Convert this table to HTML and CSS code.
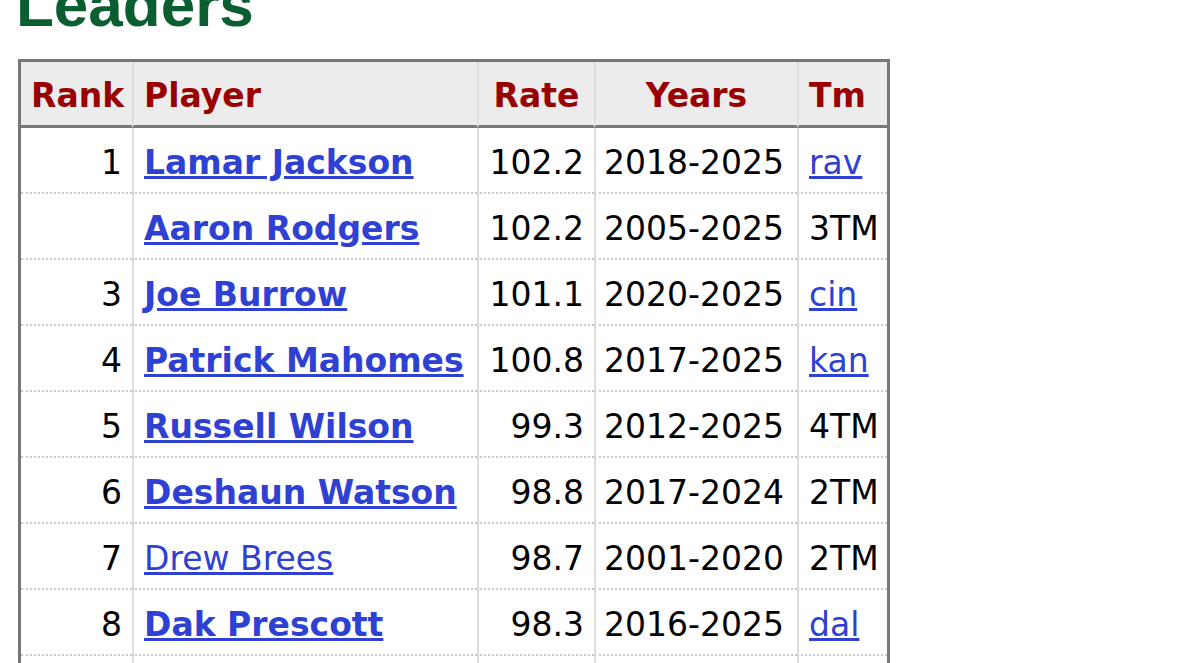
FILE: index.html
```html
<!DOCTYPE html>
<html lang="en">
<head>
    <meta charset="UTF-8">
    <meta name="viewport" content="width=device-width, initial-scale=1.0">
    <title>Leaders</title>
    <link rel="stylesheet" href="styles.css">
</head>
<body>
    <div class="page">
        <h1>Leaders</h1>

        <table class="leaders">
            <thead>
                <tr>
                    <th class="rank">Rank</th>
                    <th class="player">Player</th>
                    <th class="rate">Rate</th>
                    <th class="years">Years</th>
                    <th class="team">Tm</th>
                </tr>
            </thead>
            <tbody>
                <tr>
                    <td class="rank">1</td>
                    <td class="player"><a href="#" class="active">Lamar Jackson</a></td>
                    <td class="rate">102.2</td>
                    <td class="years">2018-2025</td>
                    <td class="team"><a href="#">rav</a></td>
                </tr>
                <tr>
                    <td class="rank"></td>
                    <td class="player"><a href="#" class="active">Aaron Rodgers</a></td>
                    <td class="rate">102.2</td>
                    <td class="years">2005-2025</td>
                    <td class="team">3TM</td>
                </tr>
                <tr>
                    <td class="rank">3</td>
                    <td class="player"><a href="#" class="active">Joe Burrow</a></td>
                    <td class="rate">101.1</td>
                    <td class="years">2020-2025</td>
                    <td class="team"><a href="#">cin</a></td>
                </tr>
                <tr>
                    <td class="rank">4</td>
                    <td class="player"><a href="#" class="active">Patrick Mahomes</a></td>
                    <td class="rate">100.8</td>
                    <td class="years">2017-2025</td>
                    <td class="team"><a href="#">kan</a></td>
                </tr>
                <tr>
                    <td class="rank">5</td>
                    <td class="player"><a href="#" class="active">Russell Wilson</a></td>
                    <td class="rate">99.3</td>
                    <td class="years">2012-2025</td>
                    <td class="team">4TM</td>
                </tr>
                <tr>
                    <td class="rank">6</td>
                    <td class="player"><a href="#" class="active">Deshaun Watson</a></td>
                    <td class="rate">98.8</td>
                    <td class="years">2017-2024</td>
                    <td class="team">2TM</td>
                </tr>
                <tr>
                    <td class="rank">7</td>
                    <td class="player"><a href="#">Drew Brees</a></td>
                    <td class="rate">98.7</td>
                    <td class="years">2001-2020</td>
                    <td class="team">2TM</td>
                </tr>
                <tr>
                    <td class="rank">8</td>
                    <td class="player"><a href="#" class="active">Dak Prescott</a></td>
                    <td class="rate">98.3</td>
                    <td class="years">2016-2025</td>
                    <td class="team"><a href="#">dal</a></td>
                </tr>
                <tr>
                    <td class="rank">9</td>
                    <td class="player"><a href="#" class="active">Jalen Hurts</a></td>
                    <td class="rate">97.1</td>
                    <td class="years">2020-2025</td>
                    <td class="team"><a href="#">phi</a></td>
                </tr>
            </tbody>
        </table>
    </div>
</body>
</html>
```

FILE: styles.css
```css
body {
    margin: 0;
    background-color: #ffffff;
    color: #000000;
    font-family: "DejaVu Sans", Verdana, sans-serif;
    overflow: hidden;
}

.page {
    padding: 0 18px;
}

h1 {
    margin: -26px 0 0 -2px;
    font-family: "Liberation Sans", Arial, sans-serif;
    font-size: 62px;
    line-height: 62px;
    font-weight: bold;
    color: #0b5e30;
}

.leaders {
    margin-top: 23px;
    width: 872px;
    table-layout: fixed;
    border-collapse: separate;
    border-spacing: 0;
    border: 3px solid #777777;
    font-size: 33px;
}

.leaders th,
.leaders td {
    box-sizing: border-box;
    padding: 0 10px;
    border-left: 2px solid #dddddd;
    white-space: nowrap;
    vertical-align: middle;
}

.leaders th:first-child,
.leaders td:first-child {
    border-left: none;
}

.leaders th {
    height: 66px;
    padding-top: 4px;
    background-color: #ececec;
    color: #990000;
    font-weight: bold;
    text-align: center;
    border-bottom: 3px solid #777777;
}

.leaders td {
    height: 66px;
    border-bottom: 2px dotted #c8c8c8;
    padding-top: 4px;
}

.leaders th.player,
.leaders th.team {
    text-align: left;
}

.leaders th.rank { width: 111px; }
.leaders th.player { width: 345px; }
.leaders th.rate { width: 117px; }
.leaders th.years { width: 203px; }
.leaders th.team { width: 90px; }

td.rank,
td.rate {
    text-align: right;
}

td.years {
    padding-left: 8px;
}

.leaders a {
    color: #2e41d3;
    text-decoration: underline;
}

.leaders a.active {
    font-weight: bold;
}
```
